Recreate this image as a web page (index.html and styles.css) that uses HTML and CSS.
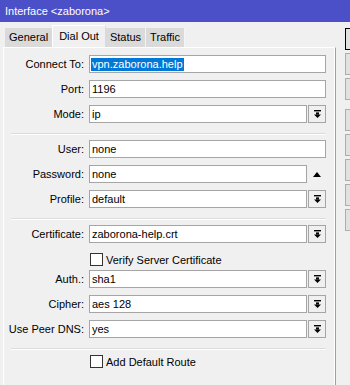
FILE: index.html
```html
<!DOCTYPE html>
<html lang="en">
<head>
  <meta charset="UTF-8">
  <meta name="viewport" content="width=device-width, initial-scale=1.0">
  <title>Interface &lt;zaborona&gt;</title>
  <link rel="stylesheet" href="styles.css">
</head>
<body>
  <div class="titlebar">Interface &lt;zaborona&gt;</div>

  <div class="window">
    <div class="main">
      <div class="tabs">
        <div class="tab">General</div>
        <div class="tab active">Dial Out</div>
        <div class="tab">Status</div>
        <div class="tab">Traffic</div>
      </div>

      <div class="panel">
        <div class="row">
          <label>Connect To:</label>
          <div class="field"><span class="selected">vpn.zaborona.help</span></div>
        </div>
        <div class="row">
          <label>Port:</label>
          <div class="field">1196</div>
        </div>
        <div class="row">
          <label>Mode:</label>
          <div class="field short">ip</div>
          <div class="drop">
            <svg width="7" height="8" viewBox="0 0 7 8"><rect x="0" y="0" width="7" height="1.4"/><rect x="2" y="2.4" width="3" height="2.2"/><polygon points="0,4.4 7,4.4 3.5,8"/></svg>
          </div>
        </div>

        <div class="sep"></div>

        <div class="row">
          <label>User:</label>
          <div class="field">none</div>
        </div>
        <div class="row">
          <label>Password:</label>
          <div class="field short">none</div>
          <div class="toggle">
            <svg width="8" height="5" viewBox="0 0 8 5"><polygon points="4,0 8,5 0,5"/></svg>
          </div>
        </div>
        <div class="row">
          <label>Profile:</label>
          <div class="field short">default</div>
          <div class="drop">
            <svg width="7" height="8" viewBox="0 0 7 8"><rect x="0" y="0" width="7" height="1.4"/><rect x="2" y="2.4" width="3" height="2.2"/><polygon points="0,4.4 7,4.4 3.5,8"/></svg>
          </div>
        </div>

        <div class="sep"></div>

        <div class="row">
          <label>Certificate:</label>
          <div class="field short">zaborona-help.crt</div>
          <div class="drop">
            <svg width="7" height="8" viewBox="0 0 7 8"><rect x="0" y="0" width="7" height="1.4"/><rect x="2" y="2.4" width="3" height="2.2"/><polygon points="0,4.4 7,4.4 3.5,8"/></svg>
          </div>
        </div>
        <div class="check-row verify">
          <span class="checkbox"></span>
          <span>Verify Server Certificate</span>
        </div>
        <div class="row">
          <label>Auth.:</label>
          <div class="field short">sha1</div>
          <div class="drop">
            <svg width="7" height="8" viewBox="0 0 7 8"><rect x="0" y="0" width="7" height="1.4"/><rect x="2" y="2.4" width="3" height="2.2"/><polygon points="0,4.4 7,4.4 3.5,8"/></svg>
          </div>
        </div>
        <div class="row">
          <label>Cipher:</label>
          <div class="field short">aes 128</div>
          <div class="drop">
            <svg width="7" height="8" viewBox="0 0 7 8"><rect x="0" y="0" width="7" height="1.4"/><rect x="2" y="2.4" width="3" height="2.2"/><polygon points="0,4.4 7,4.4 3.5,8"/></svg>
          </div>
        </div>
        <div class="row">
          <label>Use Peer DNS:</label>
          <div class="field short">yes</div>
          <div class="drop">
            <svg width="7" height="8" viewBox="0 0 7 8"><rect x="0" y="0" width="7" height="1.4"/><rect x="2" y="2.4" width="3" height="2.2"/><polygon points="0,4.4 7,4.4 3.5,8"/></svg>
          </div>
        </div>

        <div class="sep"></div>

        <div class="check-row">
          <span class="checkbox"></span>
          <span>Add Default Route</span>
        </div>
      </div>
    </div>

    <div class="side">
      <div class="btn default"></div>
      <div class="btn"></div>
      <div class="btn"></div>
      <div class="btn gap"></div>
      <div class="btn"></div>
      <div class="btn"></div>
      <div class="btn"></div>
      <div class="btn"></div>
    </div>
  </div>
</body>
</html>
```

FILE: styles.css
```css
body {
  margin: 0;
  width: 350px;
  height: 385px;
  overflow: hidden;
  background-color: #f0f0f0;
  font-family: "Liberation Sans", Arial, sans-serif;
  font-size: 11px;
  color: #000;
}
.titlebar {
  height: 22px;
  line-height: 22px;
  padding-left: 5px;
  background-color: #4b4fc8;
  color: #fff;
}
.window {
  display: flex;
}
.main {
  width: 333px;
  padding-left: 3px;
  flex-shrink: 0;
}
.tabs {
  display: flex;
  align-items: flex-end;
  height: 25px;
  padding-left: 2px;
}
.tab {
  height: 19px;
  line-height: 18px;
  padding: 0 4px;
  background-color: #dadada;
  border-right: 1px solid #f4f4f4;
  text-align: center;
}
.tab.active {
  height: 22px;
  line-height: 21px;
  padding: 0 6px;
  margin-left: -1px;
  background-color: #f0f0f0;
  border-left: 1px solid #fff;
  border-top: 1px solid #fff;
  border-right: 1px solid #dadada;
  box-sizing: border-box;
}
.panel {
  display: flex;
  flex-direction: column;
  height: 340px;
  padding-top: 7px;
  border-top: 1px solid #fff;
  border-left: 1px solid #fff;
  border-right: 1px solid #a0a0a0;
  box-shadow: inset -1px 0 #fff;
}
.row {
  display: flex;
  align-items: center;
  height: 18px;
  flex-shrink: 0;
  margin-bottom: 7px;
}
.row label {
  width: 80px;
  text-align: right;
  margin-right: 5px;
}
.field {
  width: 237px;
  height: 18px;
  box-sizing: border-box;
  border: 1px solid #a5a5a5;
  background: #fff;
  padding-left: 2px;
  line-height: 16px;
  white-space: nowrap;
}
.field.short {
  width: 218px;
}
.selected {
  display: inline-block;
  line-height: 13px;
  padding: 0 1px;
  margin-left: -1px;
  background-color: #0078d7;
  color: #fff;
}
.drop {
  width: 18px;
  height: 18px;
  box-sizing: border-box;
  margin-left: 1px;
  border: 1px solid #a5a5a5;
  background: #f0f0f0;
  display: flex;
  align-items: center;
  justify-content: center;
}
.toggle {
  width: 18px;
  height: 18px;
  margin-left: 1px;
  display: flex;
  align-items: center;
  justify-content: center;
}
.sep {
  width: 315px;
  flex-shrink: 0;
  margin: 3px 0 5px 7px;
  border-top: 1px solid #dcdcdc;
  border-bottom: 1px solid #fff;
}
.check-row {
  display: flex;
  align-items: center;
  flex-shrink: 0;
  height: 13px;
  padding-left: 86px;
  margin-bottom: 7px;
}
.check-row.verify {
  margin-top: 3px;
  margin-bottom: 4px;
}
.checkbox {
  width: 13px;
  height: 13px;
  box-sizing: border-box;
  border: 1px solid #333;
  background: #fff;
  margin-right: 3px;
}
.side {
  flex: 1;
  margin-left: 9px;
  padding-top: 6px;
  overflow: hidden;
}
.btn {
  height: 22px;
  box-sizing: border-box;
  margin-bottom: 3px;
  border: 1px solid #adadad;
  border-right: none;
  background-color: #e1e1e1;
}
.btn.default {
  border-color: #000;
}
.btn.gap {
  margin-top: 9px;
}
```
